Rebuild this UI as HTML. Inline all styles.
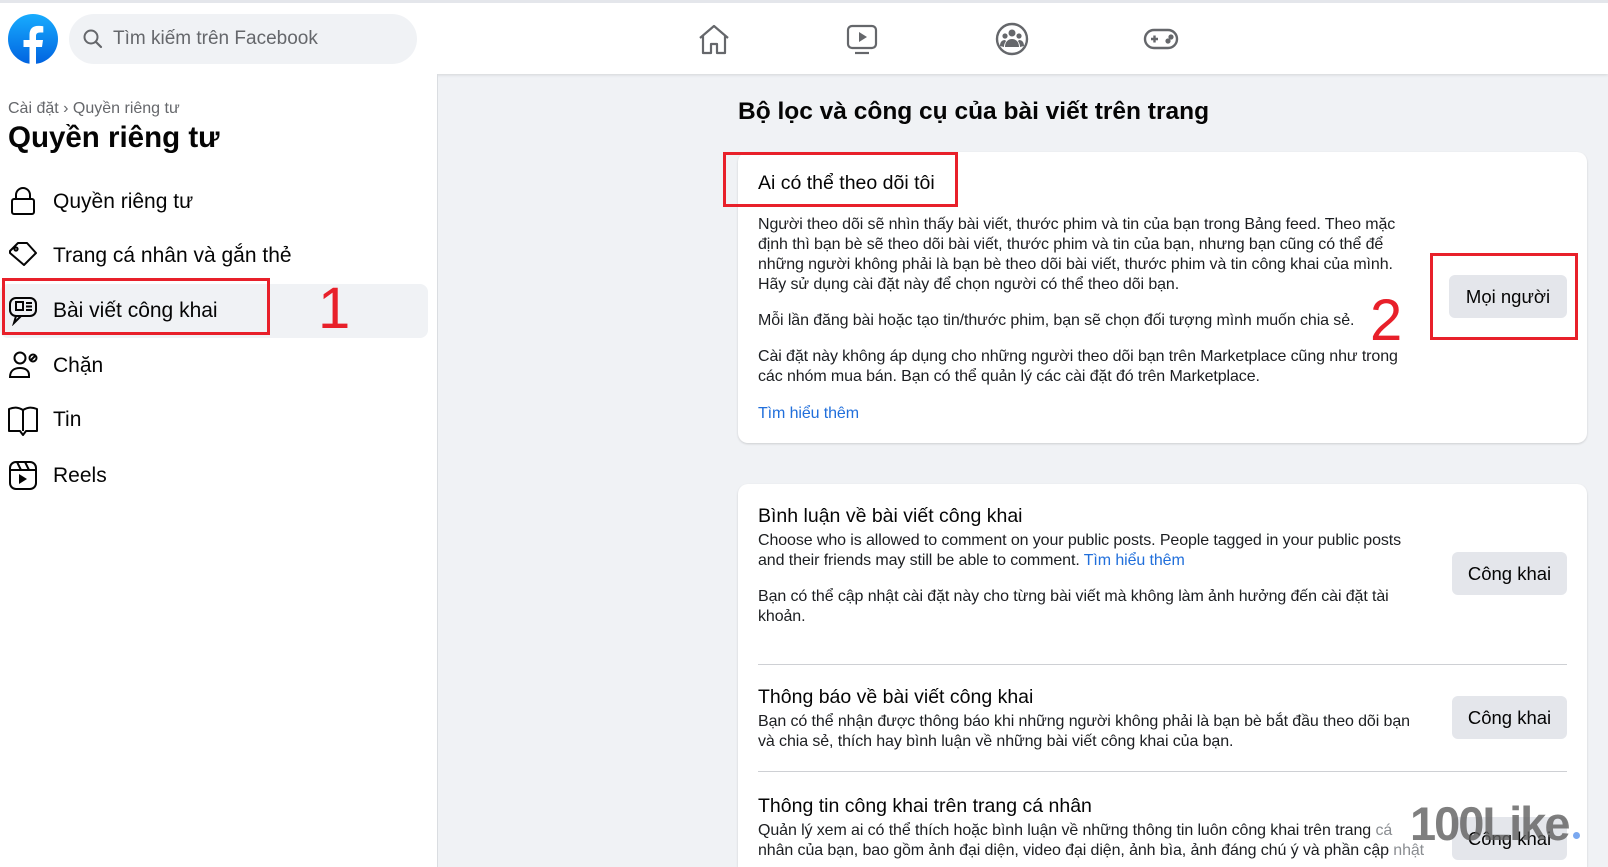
<!DOCTYPE html>
<html style="overflow:hidden"><head><meta charset="utf-8"><style>
*{margin:0;padding:0;box-sizing:border-box}
body{width:1608px;height:867px;overflow:hidden;background:#f0f2f5;font-family:"Liberation Sans",sans-serif;color:#050505;position:relative}
.a{position:absolute;white-space:nowrap}
.top{position:absolute;left:0;top:0;width:1608px;height:74px;background:#fff;border-top:3px solid #e4e6eb;box-shadow:0 1px 3px rgba(0,0,0,.12)}
.side{position:absolute;left:0;top:74px;width:438px;height:793px;background:#fff;border-right:1px solid #dadde1}
.mi{position:absolute;left:53px;font-size:21px;line-height:24px}
.ic{position:absolute;left:8px}
.card{position:absolute;left:738px;width:849px;background:#fff;border-radius:10px;box-shadow:0 1px 2px rgba(0,0,0,.15)}
.t{position:absolute;font-size:16px;line-height:20px;color:#1c1e21;white-space:nowrap;letter-spacing:-.1px}
.h{position:absolute;font-size:19.5px;font-weight:500;white-space:nowrap}
.btn{position:absolute;background:#e4e6eb;border-radius:6px;font-size:18.5px;display:flex;align-items:center;justify-content:center;color:#050505}
.red{position:absolute;border:3px solid #e8202a}
.num{position:absolute;color:#e8202a;font-size:58px;line-height:58px}
.lnk{color:#216fdb}
.hr{position:absolute;left:758px;width:809px;height:1px;background:#ced0d4}
</style></head><body>
<div class="top"></div>
<svg class="a" style="left:8px;top:14px" width="50" height="50" viewBox="0 0 50 50"><defs><linearGradient id="g" x1="0" y1="0" x2="0" y2="1"><stop offset="0" stop-color="#18acfe"/><stop offset="1" stop-color="#0163e0"/></linearGradient></defs><circle cx="25" cy="25" r="25" fill="url(#g)"/><path d="M28 50V33h6l1-7h-7v-4c0-2 1-3.5 4-3.5h3.3v-6.2c-1-.2-3-.4-5.3-.4-5.3 0-8.5 3.2-8.5 8.8V26h-6v7h6v17z" fill="#fff"/></svg>
<div class="a" style="left:69px;top:14px;width:348px;height:50px;border-radius:25px;background:#f0f2f5"></div>
<svg class="a" style="left:82px;top:28px" width="22" height="22" viewBox="0 0 22 22"><circle cx="9" cy="9" r="6.5" fill="none" stroke="#65676b" stroke-width="2"/><path d="M14 14l5 5" stroke="#65676b" stroke-width="2.2" stroke-linecap="round"/></svg>
<div class="a" style="left:113px;top:28px;font-size:19px;color:#65676b">Tìm kiếm trên Facebook</div>
<svg class="a" style="left:697px;top:23px" width="34" height="34" viewBox="0 0 34 34" fill="none" stroke="#65676b" stroke-width="2.2" stroke-linejoin="round"><path d="M3 15L17 3l14 12M6 13v17h8v-9h6v9h8V13"/></svg>
<svg class="a" style="left:846px;top:24px" width="32" height="32" viewBox="0 0 32 32" fill="none" stroke="#65676b" stroke-width="2.2"><rect x="2" y="2" width="28" height="22" rx="4"/><path d="M9 29h14"/><path d="M13 8v10l8-5z" fill="#65676b" stroke="none"/></svg>
<svg class="a" style="left:995px;top:22px" width="34" height="34" viewBox="0 0 34 34"><circle cx="17" cy="17" r="15" fill="none" stroke="#65676b" stroke-width="2.4"/><circle cx="17" cy="11" r="3.5" fill="#65676b"/><circle cx="10" cy="14" r="2.6" fill="#65676b"/><circle cx="24" cy="14" r="2.6" fill="#65676b"/><path d="M10 25c0-5 3-8 7-8s7 3 7 8zM5 24c0-4 2-6 5-6l1 1c-1 2-2 3-2 6zM29 24c0-4-2-6-5-6l-1 1c1 2 2 3 2 6z" fill="#65676b"/></svg>
<svg class="a" style="left:1143px;top:28px" width="36" height="22" viewBox="0 0 36 22" fill="none" stroke="#65676b" stroke-width="2.4"><rect x="2" y="2" width="32" height="18" rx="9"/><path d="M8 11h7M11.5 7.5v7"/><circle cx="25" cy="13" r="1.4" fill="#65676b"/><circle cx="28" cy="9" r="1.4" fill="#65676b"/></svg>

<div class="side"></div>
<div class="a" style="left:8px;top:100px;font-size:16px;color:#65676b">Cài đặt › Quyền riêng tư</div>
<div class="a" style="left:8px;top:121px;font-size:29.5px;font-weight:bold">Quyền riêng tư</div>
<div class="a" style="left:0;top:284px;width:428px;height:54px;background:#f0f2f5;border-radius:8px"></div>
<svg class="ic" style="top:186px" width="30" height="30" viewBox="0 0 30 30" fill="none" stroke="#050505" stroke-width="2"><rect x="4" y="13" width="22" height="15" rx="2"/><path d="M8 13V9a7 7 0 0 1 14 0v4"/></svg>
<svg class="ic" style="top:241px" width="30" height="30" viewBox="0 0 30 30" fill="none" stroke="#050505" stroke-width="2" stroke-linejoin="round"><path d="M2 10l8-8h9l9 10-12 12-14-12z"/><circle cx="8" cy="8" r="1.6"/></svg>
<svg class="ic" style="top:296px" width="30" height="30" viewBox="0 0 30 30" fill="none" stroke="#050505" stroke-width="2"><rect x="2" y="2" width="26" height="18" rx="6"/><path d="M8 20l-2 7 7-7"/><rect x="8" y="6" width="7" height="8"/><path d="M18 7h6M18 10.5h6M18 14h6"/></svg>
<svg class="ic" style="top:350px" width="30" height="30" viewBox="0 0 30 30" fill="none" stroke="#050505" stroke-width="2"><circle cx="12" cy="8" r="5.5"/><path d="M2 27c0-6 4-9 10-9s9 3 9 7v2z"/><circle cx="25" cy="8" r="3.5"/><path d="M23 10l4-4"/></svg>
<svg class="ic" style="top:405px" width="30" height="32" viewBox="0 0 30 32" fill="none" stroke="#050505" stroke-width="2" stroke-linejoin="round"><path d="M1 26V4c5-2 9-2 14 1 5-3 9-3 14-1v22H18l-3 4-3-4z"/><path d="M15 5v21"/></svg>
<svg class="ic" style="top:460px" width="30" height="32" viewBox="0 0 30 32" fill="none" stroke="#050505" stroke-width="2"><rect x="2" y="2" width="26" height="27" rx="6"/><path d="M2 10h26M9 2l4 8M17 2l4 8"/><path d="M11 14v10l8-5z" fill="#050505" stroke="none"/></svg>
<div class="mi" style="top:190px">Quyền riêng tư</div>
<div class="mi" style="top:244px">Trang cá nhân và gắn thẻ</div>
<div class="mi" style="top:299px">Bài viết công khai</div>
<div class="mi" style="top:354px">Chặn</div>
<div class="mi" style="top:408px">Tin</div>
<div class="mi" style="top:464px">Reels</div>
<div class="red" style="left:2px;top:278px;width:268px;height:57px"></div>
<div class="num" style="left:318px;top:280px">1</div>

<div class="a" style="left:738px;top:98px;font-size:24.5px;font-weight:bold">Bộ lọc và công cụ của bài viết trên trang</div>

<div class="card" style="top:152px;height:291px"></div>
<div class="h" style="left:758px;top:172px">Ai có thể theo dõi tôi</div>
<div class="red" style="left:723px;top:152px;width:235px;height:55px"></div>
<div class="t" style="left:758px;top:215px">Người theo dõi sẽ nhìn thấy bài viết, thước phim và tin của bạn trong Bảng feed. Theo mặc<br>định thì bạn bè sẽ theo dõi bài viết, thước phim và tin của bạn, nhưng bạn cũng có thể để<br>những người không phải là bạn bè theo dõi bài viết, thước phim và tin công khai của mình.<br>Hãy sử dụng cài đặt này để chọn người có thể theo dõi bạn.</div>
<div class="t" style="left:758px;top:311px">Mỗi lần đăng bài hoặc tạo tin/thước phim, bạn sẽ chọn đối tượng mình muốn chia sẻ.</div>
<div class="t" style="left:758px;top:347px">Cài đặt này không áp dụng cho những người theo dõi bạn trên Marketplace cũng như trong<br>các nhóm mua bán. Bạn có thể quản lý các cài đặt đó trên Marketplace.</div>
<div class="t lnk" style="left:758px;top:404px">Tìm hiểu thêm</div>
<div class="btn" style="left:1449px;top:275px;width:118px;height:43px">Mọi người</div>
<div class="red" style="left:1430px;top:253px;width:148px;height:87px"></div>
<div class="num" style="left:1370px;top:292px">2</div>

<div class="card" style="top:484px;height:383px;border-radius:10px 10px 0 0"></div>
<div class="h" style="left:758px;top:505px">Bình luận về bài viết công khai</div>
<div class="t" style="left:758px;top:531px">Choose who is allowed to comment on your public posts. People tagged in your public posts<br>and their friends may still be able to comment. <span class="lnk">Tìm hiểu thêm</span></div>
<div class="t" style="left:758px;top:587px">Bạn có thể cập nhật cài đặt này cho từng bài viết mà không làm ảnh hưởng đến cài đặt tài<br>khoản.</div>
<div class="btn" style="left:1452px;top:552px;width:115px;height:43px">Công khai</div>
<div class="hr" style="top:664px"></div>
<div class="h" style="left:758px;top:686px">Thông báo về bài viết công khai</div>
<div class="t" style="left:758px;top:712px">Bạn có thể nhận được thông báo khi những người không phải là bạn bè bắt đầu theo dõi bạn<br>và chia sẻ, thích hay bình luận về những bài viết công khai của bạn.</div>
<div class="btn" style="left:1452px;top:696px;width:115px;height:43px">Công khai</div>
<div class="hr" style="top:771px"></div>
<div class="h" style="left:758px;top:795px">Thông tin công khai trên trang cá nhân</div>
<div class="t" style="left:758px;top:821px">Quản lý xem ai có thể thích hoặc bình luận về những thông tin luôn công khai trên trang <span style="color:#8a8d91">cá</span><br>nhân của bạn, bao gồm ảnh đại diện, video đại diện, ảnh bìa, ảnh đáng chú ý và phần cập <span style="color:#8a8d91">nhật</span></div>
<div class="btn" style="left:1452px;top:817px;width:115px;height:43px">Công khai</div>
<div class="a" style="left:1410px;top:796px;font-size:47px;font-weight:bold;color:rgba(95,95,95,.8);letter-spacing:-2px">100Like</div>
<div class="a" style="left:1573px;top:832px;width:7px;height:7px;border-radius:50%;background:#7aa8f0"></div>
</body></html>
